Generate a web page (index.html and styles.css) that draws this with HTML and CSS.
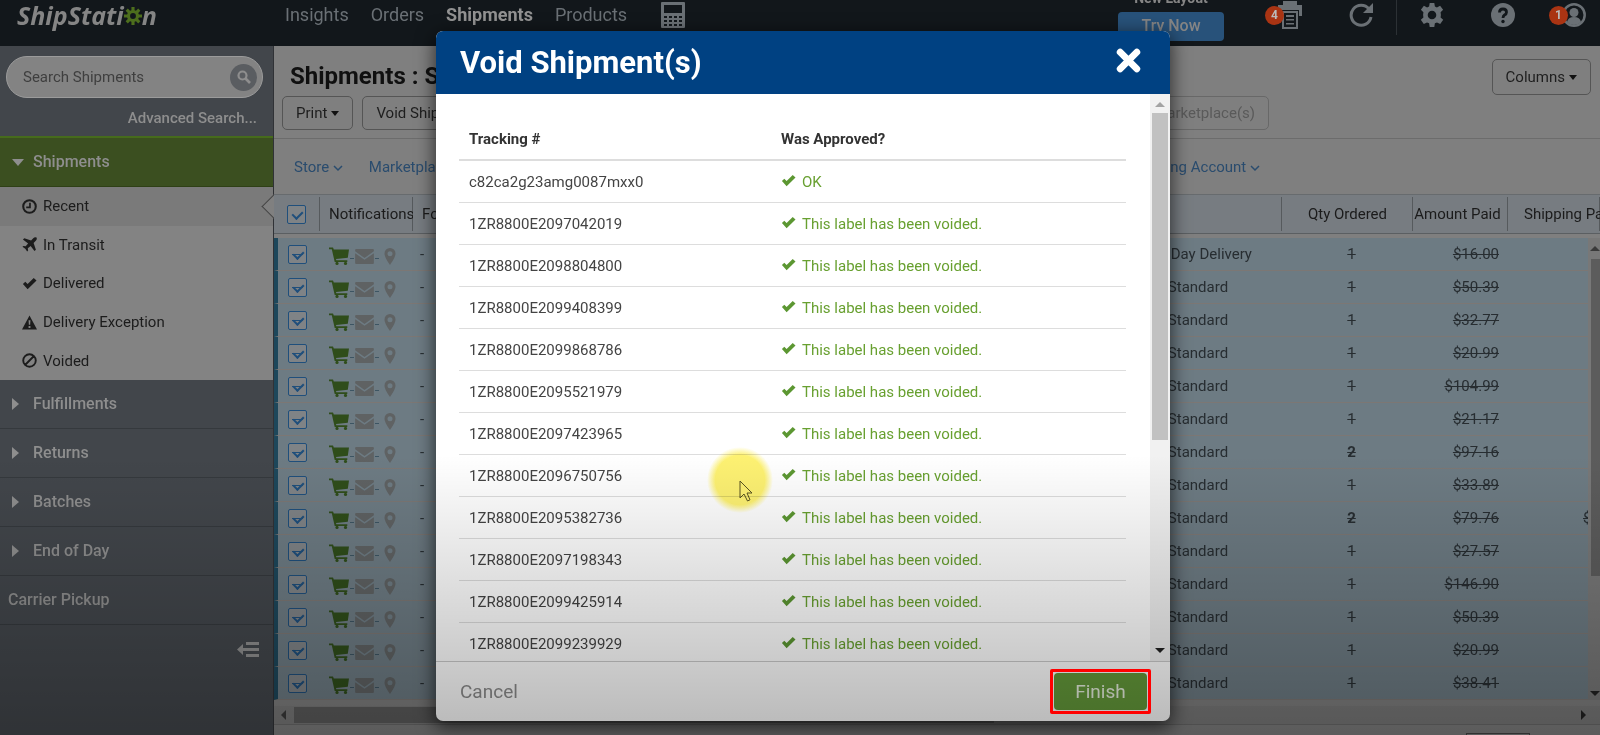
FILE: index.html
```html
<!DOCTYPE html>
<html lang="en">
<head>
    <meta charset="utf-8">
    <title>ShipStation - Shipments</title>
    <link rel="stylesheet" href="styles.css">
</head>
<body>
    <!-- shared icons -->
    <svg class="sprite" aria-hidden="true">
        <symbol id="i-check" viewBox="0 0 16 13"><path d="M1 7 L3.5 4.5 L6 7 L12.5 0.5 L15.5 3.2 L6 12.5 Z"/></symbol>
        <symbol id="i-cart" viewBox="0 0 20 18"><path d="M0 0.5h4l0.8 2H20l-1.2 8.2L7 12l0.3 1.3h11V15H5.7L2.8 2.3H0z"/><circle cx="8" cy="16.4" r="1.6"/><circle cx="16.5" cy="16.4" r="1.6"/></symbol>
        <symbol id="i-mail" viewBox="0 0 20 16"><path d="M1 0h18q1 0 1 1v1.5L10 9.5 0 2.500V1Q0 0 1 0zM0 4.500l10 7 10-7V15q0 1-1 1H1q-1 0-1-1z"/></symbol>
        <symbol id="i-pin" viewBox="0 0 12 17"><path fill-rule="evenodd" d="M6 0a5.500 5.500 0 0 1 5.500 5.500C11.500 9 8 14 6 17 4 14 0.500 9 0.500 5.500A5.500 5.500 0 0 1 6 0zM6 3.200a2.500 2.500 0 1 0 0 5 2.500 2.500 0 0 0 0-5z"/></symbol>
        <symbol id="i-gear" viewBox="0 0 24 24"><path fill-rule="evenodd" d="M9.700 0h4.600l.6 3.500 2 .9 3.200-1.700 3 4-2.500 2.500.3 2.800-.3 2.400 2.600 2.400-3 4.200-3.200-1.600-2.100.9-.6 3.700H9.700l-.6-3.700-2.100-.9L3.800 21l-3-4.200 2.600-2.400-.3-2.400.3-2.800L.9 6.700l3-4 3.200 1.700 2-.9zM12 7.700a4.300 4.300 0 1 0 0 8.600 4.300 4.300 0 0 0 0-8.600z"/></symbol>
        <symbol id="i-down" viewBox="0 0 10 7"><path d="M1 1l4 4 4-4" fill="none" stroke="currentColor" stroke-width="1.500"/></symbol>
    </svg>

    <div class="app">
        <header class="topbar">
            <a class="logo" href="#" aria-label="ShipStation">ShipStati<svg viewBox="-10 -10 20 20"><circle r="5" fill="none" stroke="currentColor" stroke-width="3.500"/><path d="M0-10V-5M0 10V5M-10 0H-5M10 0H5M-7-7l3.500 3.500M7 7L3.500 3.500M-7 7l3.500-3.500M7-7L3.500-3.500" stroke="currentColor" stroke-width="3.500"/></svg>n</a>
            <nav class="mainnav">
                <a href="#">Insights</a>
                <a href="#">Orders</a>
                <a href="#" class="active">Shipments</a>
                <a href="#">Products</a>
                <a href="#" class="calc" aria-label="Rate calculator"><svg viewBox="0 0 24 26"><path fill-rule="evenodd" d="M1 0h22q1 0 1 1v24q0 1-1 1H1q-1 0-1-1V1Q0 0 1 0zM3 3v8h18V3zM3 14v2h3v-2zm5 0v2h3v-2zm5 0v2h3v-2zm5 0v2h3v-2zM3 18v2h3v-2zm5 0v2h3v-2zm5 0v2h3v-2zm5 0v2h3v-2zM3 22v2h3v-2zm5 0v2h3v-2zm5 0v2h3v-2zm5 0v2h3v-2z"/></svg></a>
            </nav>
            <div class="trynow">
                <span>New Layout</span>
                <button type="button">Try Now</button>
            </div>
            <div class="tools">
                <button type="button" class="tool" aria-label="Print jobs">
                    <svg viewBox="0 0 24 28"><path fill-rule="evenodd" d="M5 0h14v4h5v11h-3V9H3v6H0V4h5zM4 10h16v18H4zm2 2v14h12V12zM8 14h8v2H8zm0 4h8v1.500H8zm0 4h8v1.500H8z"/></svg>
                    <span class="badge">4</span>
                </button>
                <button type="button" class="tool refresh" aria-label="Refresh">
                    <svg viewBox="0 0 24 24"><path d="M20 6A10 10 0 1 0 22 14" fill="none" stroke="currentColor" stroke-width="3"/><path d="M24 0v10H14z"/></svg>
                </button>
                <button type="button" class="tool" aria-label="Settings"><svg viewBox="0 0 24 24"><use href="#i-gear"/></svg></button>
                <button type="button" class="tool" aria-label="Help">
                    <svg viewBox="0 0 24 24"><circle cx="12" cy="12" r="12"/><path d="M8.500 9.500Q8.500 6 12 6t3.500 3.200Q15.500 11 13.500 12 12 13 12 15" fill="none" stroke="#12171b" stroke-width="2.800"/><circle cx="12" cy="18.500" r="1.700" fill="#12171b"/></svg>
                </button>
                <button type="button" class="tool" aria-label="Account">
                    <svg viewBox="0 0 24 24"><circle cx="12" cy="12" r="10.700" fill="none" stroke="currentColor" stroke-width="2.500"/><circle cx="12" cy="9.500" r="4.500"/><path d="M5 19q1-5 7-5t7 5q-3 3-7 3t-7-3z"/></svg>
                    <span class="badge">1</span>
                </button>
            </div>
        </header>

        <div class="page">
            <aside class="sidebar">
                <form class="search">
                    <input type="text" placeholder="Search Shipments" aria-label="Search Shipments">
                    <button type="button" aria-label="Search"><svg viewBox="0 0 14 14"><circle cx="5.500" cy="5.500" r="4" fill="none" stroke="currentColor" stroke-width="2.200"/><path d="M8.500 8.500L13 13" stroke="currentColor" stroke-width="2.600"/></svg></button>
                </form>
                <a class="advanced" href="#">Advanced Search...</a>
                <a class="section open" href="#"><i class="tri down"></i>Shipments</a>
                <ul class="views">
                    <li class="selected"><a href="#"><svg viewBox="0 0 16 16"><circle cx="8" cy="8" r="6.700" fill="none" stroke="currentColor" stroke-width="2.200"/><path d="M8.500 4v5H4.500" fill="none" stroke="currentColor" stroke-width="1.800"/></svg>Recent</a></li>
                    <li><a href="#"><svg viewBox="0 0 16 16"><path d="M15.500.5q-2-.8-3.500.8L9.700 3.600 2.500 1.200 1 2.700l5.500 4.100-2.600 3L1.500 9.500.5 10.500l3 2 2 3 1-1-.3-2.400 3-2.600 4.100 5.500 1.500-1.500-2.400-7.200L14.700 4q1.600-1.500.8-3.500z"/></svg>In Transit</a></li>
                    <li><a href="#"><svg viewBox="0 0 16 13"><use href="#i-check"/></svg>Delivered</a></li>
                    <li><a href="#"><svg viewBox="0 0 16 16"><path fill-rule="evenodd" d="M8 0.500L16 15.500H0zM7 5.500l.3 5h1.400l.3-5zM7 11.800v2h2v-2z"/></svg>Delivery Exception</a></li>
                    <li><a href="#"><svg viewBox="0 0 16 16"><path d="M8 1.300a6.700 6.700 0 1 0 0 13.400A6.700 6.700 0 0 0 8 1.300zM3.500 12.500l9-9" fill="none" stroke="currentColor" stroke-width="2"/></svg>Voided</a></li>
                </ul>
                <a class="section" href="#"><i class="tri"></i>Fulfillments</a>
                <a class="section" href="#"><i class="tri"></i>Returns</a>
                <a class="section" href="#"><i class="tri"></i>Batches</a>
                <a class="section" href="#"><i class="tri"></i>End of Day</a>
                <a class="section plain" href="#">Carrier Pickup</a>
                <button type="button" class="collapse" aria-label="Collapse menu"><svg viewBox="0 0 22 15"><path d="M0 7.500L6 2v4h16v3H6v4zM9 0h13v3H9zM9 12h13v3H9z"/></svg></button>
            </aside>

            <main class="content">
                <div class="titlebar">
                    <h1>Shipments : Shipped</h1>
                    <button type="button" class="btn columns">Columns <i class="caret"></i></button>
                </div>
                <div class="toolbar">
                    <button type="button" class="btn">Print <i class="caret"></i></button>
                    <button type="button" class="btn">Void Shipment(s)</button>
                    <button type="button" class="btn notify" disabled>Notify Marketplace(s)</button>
                </div>
                <div class="filters">
                    <a href="#">Store <svg><use href="#i-down"/></svg></a>
                    <a href="#">Marketplace <svg><use href="#i-down"/></svg></a>
                    <a href="#" class="account">Shipping Account <svg><use href="#i-down"/></svg></a>
                </div>
                <div class="gridwrap">
                    <table class="grid">
                        <colgroup>
                            <col class="c-check"><col class="c-note"><col><col class="c-service"><col class="c-qty"><col class="c-amount"><col class="c-paid">
                        </colgroup>
                        <thead>
                            <tr>
                                <th><input type="checkbox" class="tick" aria-label="Select all" checked></th>
                                <th>Notifications</th>
                                <th>Folder</th>
                                <th></th>
                                <th>Qty Ordered</th>
                                <th>Amount Paid</th>
                                <th>Shipping Paid</th>
                            </tr>
                        </thead>
                        <tbody id="shipments"></tbody>
                    </table>
                    <div class="vscroll"><i class="arrow up"></i><span class="thumb"></span><i class="arrow down"></i></div>
                </div>
                <div class="hscroll"><i class="arrow left"></i><span class="thumb"></span><i class="arrow right"></i></div>
                <div class="pager"><input type="text" aria-label="Page"></div>
            </main>
        </div>
    </div>

    <div class="backdrop">
        <div class="modal" role="dialog" aria-labelledby="modal-title">
            <div class="modal-header">
                <h2 id="modal-title">Void Shipment(s)</h2>
                <button type="button" aria-label="Close"><svg viewBox="0 0 24 24"><path d="M4 4l16 16M20 4L4 20" stroke="currentColor" stroke-width="6.500" stroke-linecap="round"/></svg></button>
            </div>
            <div class="modal-body">
                <div class="results">
                    <table>
                        <thead><tr><th>Tracking #</th><th>Was Approved?</th></tr></thead>
                        <tbody id="results"></tbody>
                    </table>
                </div>
                <div class="mscroll"><i class="arrow up"></i><span class="thumb"></span><i class="arrow down"></i></div>
            </div>
            <div class="modal-footer">
                <button type="button" class="cancel">Cancel</button>
                <div class="finish-wrap">
                    <button type="button" class="finish">Finish</button>
                    <span class="frame"></span>
                </div>
            </div>
        </div>
    </div>

    <div class="pointer"><svg viewBox="0 0 14 22"><path d="M1 1v17l4-4 3.500 7 2.500-1.200L8 13h5z"/></svg></div>
    <div class="shade"></div>

    <script>
        const shipments = [
            ["Next Day Delivery", 1, "$16.00"],
            ["UPS Standard", 1, "$50.39"],
            ["UPS Standard", 1, "$32.77"],
            ["UPS Standard", 1, "$20.99"],
            ["UPS Standard", 1, "$104.99"],
            ["UPS Standard", 1, "$21.17"],
            ["UPS Standard", 2, "$97.16"],
            ["UPS Standard", 1, "$33.89"],
            ["UPS Standard", 2, "$79.76", "$5.99"],
            ["UPS Standard", 1, "$27.57"],
            ["UPS Standard", 1, "$146.90"],
            ["UPS Standard", 1, "$50.39"],
            ["UPS Standard", 1, "$20.99"],
            ["UPS Standard", 1, "$38.41"]
        ];
        document.getElementById("shipments").innerHTML = shipments.map(s => `
            <tr>
                <td><input type="checkbox" class="tick" aria-label="Select shipment" checked></td>
                <td><div class="notes"><svg class="cart"><use href="#i-cart"/></svg><i></i><svg class="mail"><use href="#i-mail"/></svg><i></i><svg class="pin"><use href="#i-pin"/></svg></div></td>
                <td>-</td>
                <td>${s[0]}</td>
                <td><s class="${s[1] > 1 ? "many" : ""}">${s[1]}</s></td>
                <td><s>${s[2]}</s></td>
                <td>${s[3] ? "<s>" + s[3] + "</s>" : ""}</td>
            </tr>`).join("");

        const tracking = ["c82ca2g23amg0087mxx0", "1ZR8800E2097042019", "1ZR8800E2098804800", "1ZR8800E2099408399",
            "1ZR8800E2099868786", "1ZR8800E2095521979", "1ZR8800E2097423965", "1ZR8800E2096750756",
            "1ZR8800E2095382736", "1ZR8800E2097198343", "1ZR8800E2099425914", "1ZR8800E2099239929"];
        document.getElementById("results").innerHTML = tracking.map((t, i) => `
            <tr><td>${t}</td><td><svg><use href="#i-check"/></svg>${i ? "This label has been voided." : "OK"}</td></tr>`).join("");
    </script>
</body>
</html>
```

FILE: styles.css
```css
* {
    box-sizing: border-box;
}
body {
    margin: 0;
    font: 15px/20px Roboto, "Liberation Sans", sans-serif;
    color: #1e1e1e;
    background: #7f7f7f;
}
a {
    color: inherit;
    text-decoration: none;
}
button, input {
    font: inherit;
    color: inherit;
}
button {
    padding: 0;
    border: 0;
    background: none;
}
svg {
    fill: currentColor;
    flex: none;
}
.sprite {
    display: none;
}
.app {
    display: flex;
    flex-direction: column;
    height: 100vh;
    overflow: hidden;
}

/* top bar */
.topbar {
    display: flex;
    align-items: center;
    height: 46px;
    padding: 0 14px 16px 17px;
    background: #12171b;
    color: #6a7075;
    flex: none;
}
.logo {
    display: flex;
    align-items: center;
    width: 268px;
    font: italic bold 25px/30px "Open Sans", "Noto Sans", sans-serif;
    color: #858585;
}
.logo svg {
    width: 18px;
    height: 18px;
    margin-top: 2px;
    color: #4d6e1d;
}
.mainnav {
    display: flex;
    align-items: center;
    gap: 22px;
    font-size: 18px;
}
.mainnav .active {
    font-weight: bold;
    color: #929292;
}
.calc {
    height: 26px;
    margin-left: 12px;
}
.calc svg {
    width: 24px;
    height: 26px;
}
.trynow {
    display: flex;
    flex-direction: column;
    align-items: center;
    gap: 6px;
    width: 106px;
    margin: 0 54px 0 auto;
    font-size: 14px;
    line-height: 16px;
    color: #858585;
}
.trynow span {
    font-weight: bold;
}
.trynow button {
    width: 106px;
    height: 29px;
    border-radius: 4px;
    background: #28527a;
    font-size: 16px;
    font-weight: 500;
}
.tools {
    display: flex;
    align-items: center;
    gap: 47px;
}
.tool {
    position: relative;
    display: flex;
    width: 24px;
}
.tool svg {
    width: 24px;
    height: 28px;
}
.refresh::after {
    content: "";
    position: absolute;
    left: 47px;
    top: -12px;
    height: 46px;
    border-left: 1px solid #2c3135;
}
.badge {
    position: absolute;
    left: -13px;
    top: 5px;
    width: 19px;
    height: 19px;
    border-radius: 50%;
    background: #a93413;
    color: #bbb;
    font-size: 12px;
    font-weight: bold;
    line-height: 19px;
    text-align: center;
}

/* sidebar */
.page {
    display: flex;
    flex: 1;
    min-height: 0;
}
.sidebar {
    display: flex;
    flex-direction: column;
    width: 274px;
    flex: none;
    background: #42464b;
    border-right: 1px solid #303236;
    color: #8e8e8e;
}
.search {
    display: flex;
    align-items: center;
    height: 42px;
    flex: none;
    margin: 10px 10px 0 6px;
    padding: 0 5px 0 16px;
    border-radius: 21px;
    border: 1px solid #9b9b9b;
    background: #838383;
}
.search input {
    flex: 1;
    min-width: 0;
    padding: 0;
    border: 0;
    background: none;
}
.search input::placeholder {
    color: #3f3f3f;
}
.search button {
    width: 27px;
    height: 27px;
    border-radius: 50%;
    background: #5a5d61;
    line-height: 0;
}
.search svg {
    width: 14px;
    height: 14px;
}
.advanced {
    height: 38px;
    flex: none;
    padding: 10px 16px 0 0;
    text-align: right;
    font-weight: 500;
}
.section {
    display: flex;
    align-items: center;
    height: 49px;
    flex: none;
    border-bottom: 1px solid #35393d;
    font-size: 16px;
    font-weight: 500;
}
.section.open {
    height: 51px;
    border-top: 2px solid #466b1c;
    border-bottom: 1px solid #2e4016;
    background: #3b4f20;
}
.section.plain {
    padding-left: 8px;
}
.tri {
    width: 21px;
    margin-left: 12px;
}
.tri::before {
    content: "";
    display: block;
    width: 0;
    border: solid transparent;
    border-width: 6px 0 6px 7px;
    border-left-color: currentColor;
}
.tri.down::before {
    border-width: 7px 6px 0;
    border-color: currentColor transparent transparent;
}
.views {
    display: grid;
    grid-auto-rows: 1fr;
    height: 193px;
    flex: none;
    margin: 0;
    padding: 0;
    list-style: none;
    background: #838383;
    color: #1c1c1c;
}
.views a {
    display: flex;
    align-items: center;
    gap: 6px;
    height: 100%;
    padding-left: 22px;
}
.views svg {
    width: 15px;
    height: 15px;
}
.selected {
    position: relative;
    background: #7a7a7a;
}
.selected::after {
    content: "";
    position: absolute;
    right: -9px;
    top: 11px;
    width: 16px;
    height: 16px;
    border: solid #444;
    border-width: 0 0 1px 1px;
    background: #808080;
    transform: rotate(45deg);
}
.collapse {
    align-self: flex-end;
    margin: 17px 14px 0 0;
    line-height: 0;
}
.collapse svg {
    width: 22px;
    height: 15px;
}

/* main */
.content {
    display: flex;
    flex-direction: column;
    flex: 1;
    min-width: 0;
    background: #7f7f7f;
    z-index: 0;
}
.titlebar {
    display: flex;
    justify-content: space-between;
    height: 50px;
    flex: none;
    padding: 13px 9px 0 16px;
}
.titlebar h1 {
    margin: 0;
    font-size: 24px;
    line-height: 34px;
    color: #101010;
}
.btn {
    display: flex;
    align-items: center;
    gap: 4px;
    height: 34px;
    padding: 0 13px;
    border: 1px solid #555;
    border-radius: 5px;
    white-space: nowrap;
}
.columns {
    height: 36px;
}
.caret {
    border: solid transparent;
    border-width: 5px 4px 0;
    border-top-color: #111;
}
.toolbar {
    display: flex;
    gap: 9px;
    max-width: 995px;
    height: 42px;
    flex: none;
    padding-left: 8px;
}
.notify {
    margin-left: auto;
    border-color: #686868;
    color: #5a5a5a;
}
.filters {
    display: flex;
    align-items: center;
    gap: 26px;
    height: 56px;
    flex: none;
    padding: 0 340px 0 20px;
    border-top: 1px solid #6c6c6c;
    color: #2a4c6e;
}
.filters svg {
    width: 10px;
    height: 7px;
}
.account {
    margin-left: auto;
}
.gridwrap {
    position: relative;
    flex: none;
}
.grid {
    width: 100%;
    table-layout: fixed;
    border-spacing: 0;
    white-space: nowrap;
    color: #272d31;
}
.c-check { width: 46px; }
.c-note { width: 93px; }
.c-service { width: 146px; }
.c-qty { width: 131px; }
.c-amount { width: 95px; }
.c-paid { width: 92px; }
.grid th {
    height: 40px;
    padding: 0;
    border-top: 1px solid #676b6e;
    border-bottom: 1px solid #5b5f62;
    background: linear-gradient(#565a5d, #565a5d) right / 1px 34px no-repeat #777c81;
    font-weight: normal;
    color: #1b1b1b;
    overflow: hidden;
}
.grid th:nth-child(3) {
    background-image: none;
    text-align: left;
    padding-left: 9px;
}
.grid th:nth-child(2) {
    text-align: left;
    padding-left: 9px;
}
.grid th:nth-child(6) {
    padding-right: 6px;
}
.grid th:nth-child(7) {
    text-align: left;
    padding-left: 16px;
}
.grid th:first-child, .grid td:first-child {
    text-align: left;
    padding-left: 13px;
}
.grid tbody::before {
    content: "";
    display: table-row;
    height: 4px;
}
.grid td {
    height: 33px;
    padding: 0;
    border-bottom: 1px solid #7c7774;
    background: #6d7b83;
    overflow: hidden;
}
.grid td:first-child {
    border-left: 4px solid #1d475b;
    padding-left: 10px;
}
.grid td:nth-child(3) {
    padding-left: 7px;
}
.grid td:nth-child(5) {
    text-align: center;
    padding-left: 8px;
}
.grid td:nth-child(6) {
    text-align: right;
    padding-right: 9px;
}
.grid td:nth-child(7) {
    padding-left: 75px;
}
.many {
    font-weight: bold;
}
.tick {
    position: relative;
    display: block;
    appearance: none;
    width: 19px;
    height: 19px;
    margin: 0;
    border: 1px solid #1f4f7c;
    border-radius: 2px;
    background: #7f8386;
}
.tick:checked::before {
    content: "";
    position: absolute;
    left: 6px;
    top: 3px;
    width: 5px;
    height: 8px;
    border: solid #1f4f7c;
    border-width: 0 2px 2px 0;
    transform: rotate(45deg);
}
td .tick:checked::after {
    content: "";
    position: absolute;
    left: 3px;
    top: 8px;
    width: 11px;
    height: 1px;
    background: #1f4f7c;
}
.notes {
    display: flex;
    align-items: center;
    padding: 4px 0 0 9px;
    color: #5f6263;
}
.notes i {
    width: 4px;
    height: 1px;
    margin: 4px 1px 0;
    background: #3d5563;
}
.cart {
    width: 20px;
    height: 18px;
    color: #2f4d1a;
}
.mail {
    width: 19px;
    height: 15px;
}
.pin {
    width: 12px;
    height: 17px;
    margin-left: 4px;
}

/* scroll bars */
.arrow {
    border: solid transparent;
    flex: none;
}
.up { border-width: 0 5px 5px; border-bottom-color: #3a3a3a; }
.arrow.down { border-width: 5px 5px 0; border-top-color: #222; }
.left { border-width: 5px 5px 5px 0; border-right-color: #3a3a3a; }
.right { border-width: 5px 0 5px 5px; border-left-color: #222; }
.vscroll {
    position: absolute;
    right: 0;
    top: 44px;
    bottom: 0;
    display: flex;
    flex-direction: column;
    align-items: center;
    width: 12px;
    padding: 8px 0 4px 2px;
    background: #787878;
}
.vscroll .thumb {
    width: 9px;
    height: 317px;
    margin: 8px 0 auto;
    background: #5c5c5c;
}
.hscroll {
    display: flex;
    align-items: center;
    height: 18px;
    margin-top: 6px;
    padding: 0 14px 0 7px;
    flex: none;
    background: #797979;
}
.hscroll .thumb {
    width: 700px;
    height: 16px;
    margin: 0 auto 0 8px;
    background: #5c5c5c;
}
.pager {
    flex: 1;
    padding: 8px 70px 0 0;
    border-top: 1px solid #6a6a6a;
    text-align: right;
}
.pager input {
    width: 64px;
    height: 28px;
    border: 1px solid #444;
    background: none;
}

/* dialog */
.backdrop {
    position: absolute;
    inset: 0;
    display: flex;
    justify-content: center;
    align-items: flex-start;
    padding: 31px 0 0 6px;
}
.modal {
    width: 734px;
    border-radius: 7px;
    background: #fff;
    box-shadow: 0 5px 18px 2px rgba(0, 0, 0, .6);
    overflow: hidden;
}
.modal-header {
    display: flex;
    align-items: center;
    justify-content: space-between;
    height: 63px;
    padding: 0 29px 0 24px;
    background: #004182;
    color: #fff;
}
.modal-header h2 {
    margin: 0;
    font-size: 31px;
    line-height: 40px;
}
.modal-header button {
    padding-bottom: 4px;
    line-height: 0;
}
.modal-header svg {
    width: 25px;
    height: 25px;
}
.modal-body {
    display: flex;
    height: calc(100vh - 168px);
    overflow: hidden;
}
.results {
    flex: 1;
    padding: 24px 24px 0 23px;
}
.results table {
    width: 100%;
    table-layout: fixed;
    border-spacing: 0;
    text-align: left;
    color: #444;
}
.results th {
    height: 43px;
    padding: 0 10px;
    border-bottom: 2px solid #ddd;
    font-weight: bold;
    color: #333;
}
.results th:first-child {
    width: 312px;
}
.results td {
    height: 42px;
    padding: 0 10px;
    border-bottom: 1px solid #ddd;
}
.results td + td {
    color: #68a030;
}
.results svg {
    width: 15px;
    height: 13px;
    margin-right: 6px;
    color: #5c9732;
}
.mscroll {
    display: flex;
    flex-direction: column;
    align-items: center;
    width: 20px;
    padding: 8px 0;
    background: #f1f1f1;
}
.mscroll .up {
    border-bottom-color: #a3a3a3;
}
.mscroll .thumb {
    width: 16px;
    height: 327px;
    margin: 6px 0 auto;
    background: #c1c1c1;
}
.modal-footer {
    display: flex;
    align-items: center;
    justify-content: space-between;
    height: 60px;
    padding: 0 23px 0 24px;
    border-top: 1px solid #ccc;
    font-size: 19px;
}
.cancel {
    color: #8c8c8c;
}
.finish-wrap {
    position: relative;
}
.finish {
    display: block;
    width: 93px;
    height: 37px;
    border-radius: 4px;
    background: #64993a;
    color: #e8f0df;
}
.frame {
    position: absolute;
    inset: -4px;
    z-index: 20;
    border: 3px solid #f00;
    border-radius: 2px;
}

/* pointer and the fade at the foot of the window */
.pointer {
    position: absolute;
    left: 707px;
    top: 447px;
    width: 66px;
    height: 66px;
    padding: 33px 0 0 32px;
    border-radius: 50%;
    background: radial-gradient(closest-side, #fdf172 75%, rgba(253, 241, 114, 0));
    mix-blend-mode: multiply;
    line-height: 0;
}
.pointer svg {
    width: 14px;
    height: 22px;
    fill: #fdf172;
    stroke: #5a5420;
}
.shade {
    position: absolute;
    inset: auto 0 0 0;
    z-index: 10;
    height: 280px;
    background: linear-gradient(rgba(0, 0, 0, 0), rgba(0, 0, 0, .28));
    pointer-events: none;
}
```
